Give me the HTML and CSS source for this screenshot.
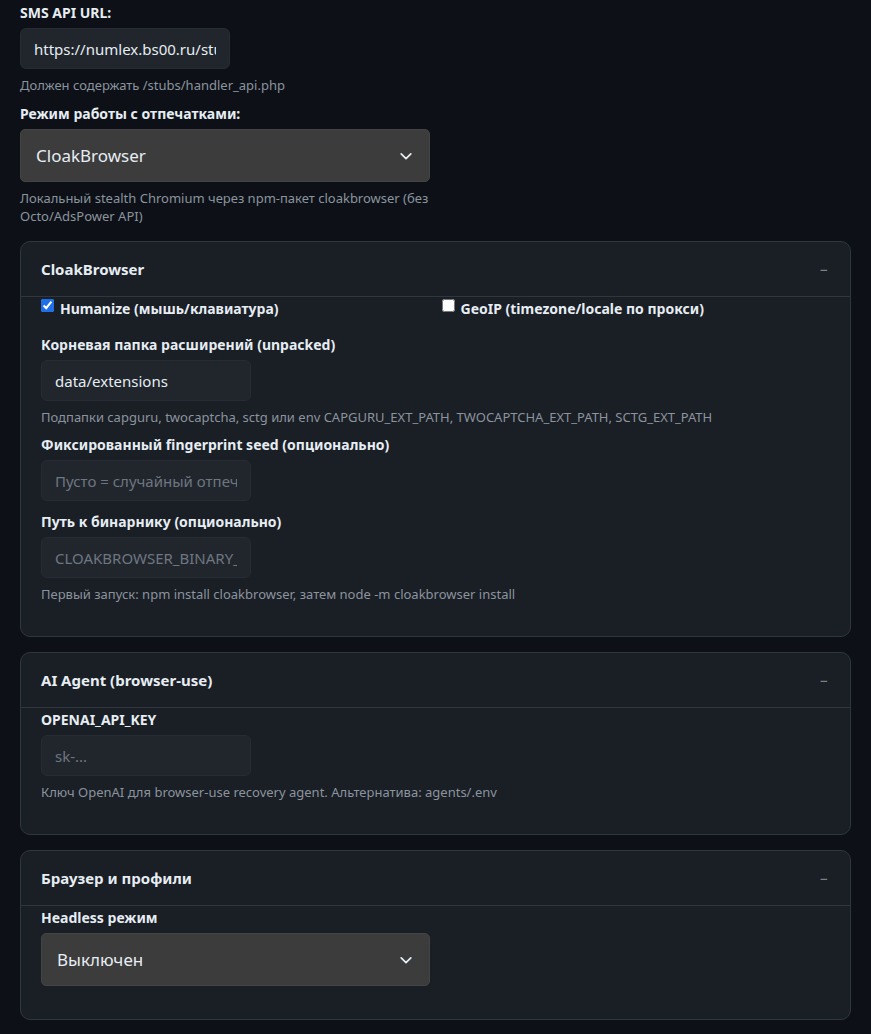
FILE: index.html
```html
<!DOCTYPE html>
<html lang="ru">
<head>
    <meta charset="UTF-8">
    <meta name="viewport" content="width=device-width, initial-scale=1.0">
    <title>Настройки</title>
    <link rel="stylesheet" href="styles.css">
</head>
<body>
    <div class="settings">
        <div class="field top-field">
            <label class="field-label" for="smsUrl">SMS API URL:</label>
            <input class="text-input" id="smsUrl" type="text" value="https://numlex.bs00.ru/stubs/handler_api.php">
            <div class="hint">Должен содержать /stubs/handler_api.php</div>
        </div>

        <div class="field top-field wide">
            <label class="field-label" for="fpMode">Режим работы с отпечатками:</label>
            <div class="select-wrap">
                <select class="select" id="fpMode">
                    <option>CloakBrowser</option>
                    <option>Octo Browser</option>
                    <option>AdsPower</option>
                </select>
                <svg class="chevron" width="14" height="14" viewBox="0 0 16 16"><path d="M2.5 5.5 8 11l5.5-5.5" fill="none" stroke="currentColor" stroke-width="2" stroke-linecap="round" stroke-linejoin="round"/></svg>
            </div>
            <div class="hint">Локальный stealth Chromium через npm-пакет cloakbrowser (без Octo/AdsPower API)</div>
        </div>

        <section class="card">
            <div class="card-header">
                <span class="card-title">CloakBrowser</span>
                <span class="collapse">−</span>
            </div>
            <div class="card-body">
                <div class="check-row">
                    <label class="check"><input type="checkbox" checked> Humanize (мышь/клавиатура)</label>
                    <label class="check"><input type="checkbox"> GeoIP (timezone/locale по прокси)</label>
                </div>

                <div class="field">
                    <label class="field-label">Корневая папка расширений (unpacked)</label>
                    <input class="text-input" type="text" value="data/extensions">
                    <div class="hint">Подпапки capguru, twocaptcha, sctg или env CAPGURU_EXT_PATH, TWOCAPTCHA_EXT_PATH, SCTG_EXT_PATH</div>
                </div>

                <div class="field no-hint">
                    <label class="field-label">Фиксированный fingerprint seed (опционально)</label>
                    <input class="text-input" type="text" placeholder="Пусто = случайный отпечаток">
                </div>

                <div class="field">
                    <label class="field-label">Путь к бинарнику (опционально)</label>
                    <input class="text-input" type="text" placeholder="CLOAKBROWSER_BINARY_PATH">
                    <div class="hint">Первый запуск: npm install cloakbrowser, затем node -m cloakbrowser install</div>
                </div>
            </div>
        </section>

        <section class="card">
            <div class="card-header">
                <span class="card-title">AI Agent (browser-use)</span>
                <span class="collapse">−</span>
            </div>
            <div class="card-body">
                <div class="field">
                    <label class="field-label">OPENAI_API_KEY</label>
                    <input class="text-input" type="password" placeholder="sk-...">
                    <div class="hint">Ключ OpenAI для browser-use recovery agent. Альтернатива: agents/.env</div>
                </div>
            </div>
        </section>

        <section class="card">
            <div class="card-header">
                <span class="card-title">Браузер и профили</span>
                <span class="collapse">−</span>
            </div>
            <div class="card-body">
                <div class="field card-select">
                    <label class="field-label">Headless режим</label>
                    <div class="select-wrap">
                        <select class="select">
                            <option>Выключен</option>
                            <option>Включен</option>
                        </select>
                        <svg class="chevron" width="14" height="14" viewBox="0 0 16 16"><path d="M2.5 5.5 8 11l5.5-5.5" fill="none" stroke="currentColor" stroke-width="2" stroke-linecap="round" stroke-linejoin="round"/></svg>
                    </div>
                </div>
            </div>
        </section>
    </div>
</body>
</html>
```

FILE: styles.css
```css
* {
    margin: 0;
    padding: 0;
    box-sizing: border-box;
}

body {
    font-family: 'Noto Sans', 'Open Sans', sans-serif;
    background: #0d1117;
    color: #e6edf3;
    font-size: 14px;
}

.settings {
    padding: 3px 20px 20px;
}

.field {
    display: flex;
    flex-direction: column;
    align-items: flex-start;
    margin-bottom: 9px;
}

.field.no-hint {
    margin-bottom: 11px;
}

.top-field {
    margin-bottom: 10px;
}

.top-field.wide {
    margin-bottom: 16px;
}

.wide {
    width: 410px;
    align-items: stretch;
}

.card-select {
    width: 389px;
    align-items: stretch;
}

.field-label {
    font-weight: 700;
    font-size: 14px;
    line-height: 20px;
    color: #e6edf3;
    margin-bottom: 5px;
}

.text-input {
    width: 210px;
    height: 41px;
    background: #21262d;
    border: 1px solid #272c34;
    border-radius: 6px;
    color: #e6edf3;
    font-family: inherit;
    font-size: 15px;
    padding: 0 13px;
    outline: none;
}

.text-input::placeholder {
    color: #6e7681;
}

.hint {
    margin-top: 7px;
    font-size: 13px;
    line-height: 18px;
    color: #8b949e;
}

.select-wrap {
    position: relative;
}

.select {
    appearance: none;
    width: 100%;
    height: 53px;
    background: #3c3c3c;
    border: 1px solid #444;
    border-radius: 5px;
    color: #e6edf3;
    font-family: inherit;
    font-size: 17px;
    padding: 0 15px;
    outline: none;
}

.chevron {
    position: absolute;
    right: 17px;
    top: 20px;
    color: #e6edf3;
    pointer-events: none;
}

.card {
    background: #1a1e25;
    border: 1px solid #30363d;
    border-radius: 10px;
    margin-bottom: 15px;
}

.card-header {
    display: flex;
    align-items: center;
    justify-content: space-between;
    height: 55px;
    padding: 0 20px;
    border-bottom: 1px solid #30363d;
}

.card-title {
    font-weight: 700;
    font-size: 15px;
}

.collapse {
    color: #8b949e;
    font-size: 14px;
    margin-right: 2px;
}

.card-body {
    padding: 2px 20px 24px;
}

.check-row {
    display: grid;
    grid-template-columns: 1fr 1fr;
    column-gap: 12px;
    margin-bottom: 16px;
}

.check {
    display: flex;
    align-items: center;
    gap: 6px;
    font-weight: 700;
    font-size: 14px;
    line-height: 20px;
}

.check input {
    width: 13px;
    height: 13px;
    margin: 0;
    accent-color: #1f6feb;
    position: relative;
    top: -4px;
}
```
